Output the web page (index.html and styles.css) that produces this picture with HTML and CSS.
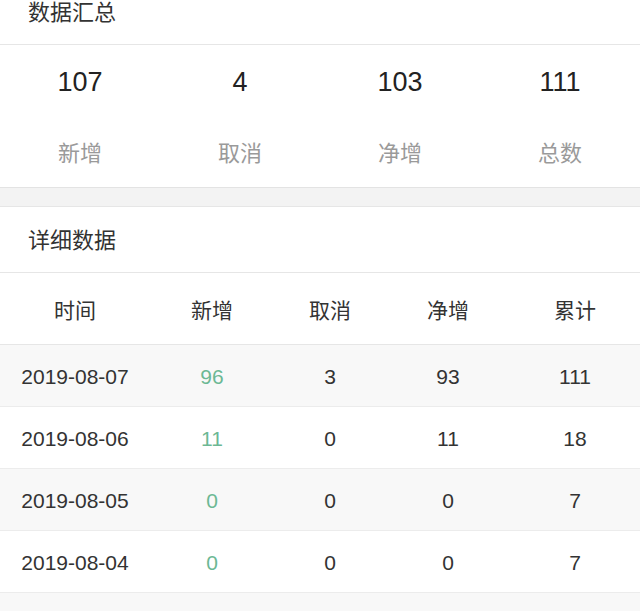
FILE: index.html
```html
<!DOCTYPE html>
<html lang="zh-CN">
<head>
<meta charset="utf-8">
<title>数据汇总</title>
<link rel="stylesheet" href="styles.css">
</head>
<body>
<section class="card card-summary">
  <h2 class="card-title card-title-top">数据汇总</h2>
  <div class="stats">
    <div class="stat"><div class="stat-num">107</div><div class="stat-label">新增</div></div>
    <div class="stat"><div class="stat-num">4</div><div class="stat-label">取消</div></div>
    <div class="stat"><div class="stat-num">103</div><div class="stat-label">净增</div></div>
    <div class="stat"><div class="stat-num">111</div><div class="stat-label">总数</div></div>
  </div>
</section>
<div class="gap"></div>
<section class="card card-detail">
  <h2 class="card-title">详细数据</h2>
  <div class="table">
    <div class="row row-head">
      <div class="cell">时间</div><div class="cell">新增</div><div class="cell">取消</div><div class="cell">净增</div><div class="cell">累计</div>
    </div>
    <div class="row row-alt">
      <div class="cell">2019-08-07</div><div class="cell green">96</div><div class="cell">3</div><div class="cell">93</div><div class="cell">111</div>
    </div>
    <div class="row">
      <div class="cell">2019-08-06</div><div class="cell green">11</div><div class="cell">0</div><div class="cell">11</div><div class="cell">18</div>
    </div>
    <div class="row row-alt">
      <div class="cell">2019-08-05</div><div class="cell green">0</div><div class="cell">0</div><div class="cell">0</div><div class="cell">7</div>
    </div>
    <div class="row">
      <div class="cell">2019-08-04</div><div class="cell green">0</div><div class="cell">0</div><div class="cell">0</div><div class="cell">7</div>
    </div>
    <div class="row row-alt row-empty"></div>
  </div>
</section>
</body>
</html>
```
FILE: styles.css
```css
* { box-sizing: border-box; }
html, body { margin: 0; padding: 0; }
body {
  background: #fff;
  font-family: "Liberation Sans", "Noto Sans CJK SC", sans-serif;
  color: #333;
  width: 640px;
  overflow: hidden;
}
.card { background: #fff; }
.card-summary { border-bottom: 1px solid #e3e3e3; }
.card-detail { border-top: 1px solid #e6e6e6; }
.gap { height: 18px; background: #f3f3f3; }
.card-title {
  margin: 0;
  font-weight: normal;
  font-size: 22px;
  line-height: 30px;
  color: #333;
  padding: 19px 28px 16px 28px;
  height: 66px;
  border-bottom: 1px solid #e6e6e6;
}
.card-title-top {
  height: 45px;
  padding-top: 0;
  padding-bottom: 0;
  line-height: 26px;
}
.stats {
  display: grid;
  grid-template-columns: repeat(4, 1fr);
  padding: 17px 0 18px;
}
.stat { text-align: center; }
.stat-num {
  font-size: 27px;
  line-height: 40px;
  color: #222;
}
.stat-label {
  margin-top: 37px;
  font-size: 22px;
  line-height: 30px;
  color: #9a9a9a;
}
.table { display: flex; flex-direction: column; }
.row {
  display: grid;
  grid-template-columns: 150px 124px 112px 124px 130px;
  height: 62px;
  padding-top: 2px;
  align-items: center;
  border-bottom: 1px solid #ececec;
  font-size: 21px;
  color: #333;
}
.row-head { height: 72px; padding-top: 0; border-bottom-color: #e6e6e6; }
.row-alt { background: #f8f8f8; }
.cell { text-align: center; }
.green { color: #6cb894; }
```
